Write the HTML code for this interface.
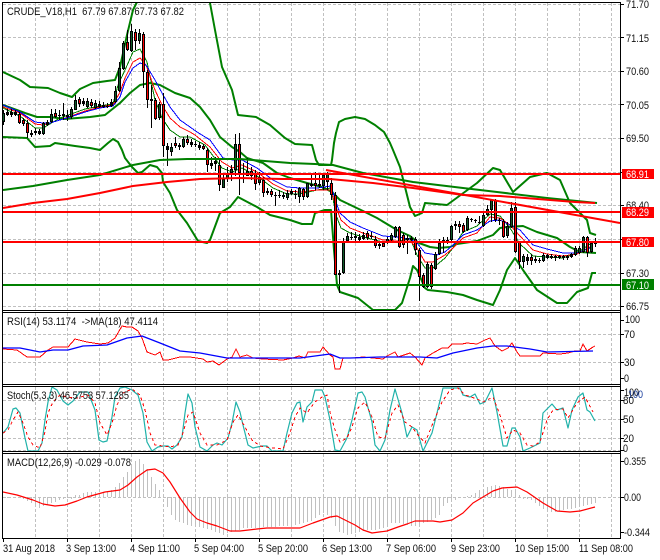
<!DOCTYPE html>
<html><head><meta charset="utf-8"><style>
html,body{margin:0;padding:0;background:#fff}
svg{display:block}
text{font-family:"Liberation Sans",sans-serif;font-size:11px;fill:#111}
.g{stroke:#c0c0c0;stroke-width:1;stroke-dasharray:3 2;fill:none}
.l{fill:none;shape-rendering:crispEdges}
.s{fill:none;stroke-linejoin:round}
</style></head><body>
<svg width="660" height="560" viewBox="0 0 660 560" xmlns="http://www.w3.org/2000/svg">
<defs>
<clipPath id="cm"><rect x="3" y="3" width="617" height="307"/></clipPath>
<clipPath id="cr"><rect x="3" y="313" width="617" height="71"/></clipPath>
<clipPath id="cs"><rect x="3" y="387" width="617" height="64"/></clipPath>
<clipPath id="cd"><rect x="3" y="454" width="617" height="84"/></clipPath>
</defs>
<rect width="660" height="560" fill="#fff"/>
<!-- grid -->
<path class="g" shape-rendering="crispEdges" d="M35.5 3V310M67.5 3V310M99.5 3V310M131.5 3V310M163.5 3V310M195.5 3V310M227.5 3V310M259.5 3V310M291.5 3V310M323.5 3V310M355.5 3V310M387.5 3V310M419.5 3V310M451.5 3V310M483.5 3V310M515.5 3V310M547.5 3V310M579.5 3V310M611.5 3V310
M35.5 313V384M67.5 313V384M99.5 313V384M131.5 313V384M163.5 313V384M195.5 313V384M227.5 313V384M259.5 313V384M291.5 313V384M323.5 313V384M355.5 313V384M387.5 313V384M419.5 313V384M451.5 313V384M483.5 313V384M515.5 313V384M547.5 313V384M579.5 313V384M611.5 313V384
M35.5 387V451M67.5 387V451M99.5 387V451M131.5 387V451M163.5 387V451M195.5 387V451M227.5 387V451M259.5 387V451M291.5 387V451M323.5 387V451M355.5 387V451M387.5 387V451M419.5 387V451M451.5 387V451M483.5 387V451M515.5 387V451M547.5 387V451M579.5 387V451M611.5 387V451
M35.5 454V538M67.5 454V538M99.5 454V538M131.5 454V538M163.5 454V538M195.5 454V538M227.5 454V538M259.5 454V538M291.5 454V538M323.5 454V538M355.5 454V538M387.5 454V538M419.5 454V538M451.5 454V538M483.5 454V538M515.5 454V538M547.5 454V538M579.5 454V538M611.5 454V538
M3 4.5H620M3 37.5H620M3 71.5H620M3 104.5H620M3 138.5H620M3 172.5H620M3 205.5H620M3 239.5H620M3 273.5H620M3 306.5H620
M3 334.5H620M3 362.5H620M3 400.5H620M3 419.5H620M3 438.5H620M3 450.5H620M3 497.5H620"/>

<g clip-path="url(#cm)">
<!-- Bollinger -->
<g class="s" stroke="#008000" stroke-width="2">
<polyline points="3,72 20,80 30,87 48,88 60,93 72,97 80,89 93,83 107,81 115,80 120,67 127,35 133,10 138,0"/>
<polyline points="210,3 215,30 222,67 232,90 238,115 256,117 270,125 285,138 295,144 312,145 316,160 319,165 331,165 332,160 334,143 336,133 339,122 345,119 355,117 365,119 375,125 384,132 390,143 393,150 400,167 410,207 415,216 422,213 425,203 447,205 477,183 493,168 500,170 513,192 530,177 547,173 560,180 570,203 587,220 590,233 596,235"/>
<polyline points="3,137 27,138 35,147 50,146 55,143 75,146 90,148 100,150 108,143 113,139 118,142 122,150 125,158 132,167 138,173 142,172 150,165 157,167 162,173 163,182 170,193 177,210 187,223 198,241 207,243 210,240 220,213 230,207 238,197 257,207 270,215 290,220 302,224 312,224 315,213 325,210 331,210 334,250 337,285 340,292 358,298 373,310 395,310 402,303 410,278 413,266 417,270 425,288 428,290 447,292 463,295 477,300 493,305 500,290 507,270 515,258 523,270 537,290 557,303 567,303 577,292 588,288 592,273 596,273"/>
<polyline points="3,105 25,113 37,117 50,117 65,119 90,117 105,115 120,103 130,93 140,85 150,83 160,85 175,93 190,98 200,107 210,120 220,137 232,147 240,152 247,158 263,163 277,173 290,178 307,183 322,187 332,192 340,200 363,211 377,218 397,230 410,236 419,243 430,247 438,248 450,247 457,244 477,241 493,235 500,228 507,227 523,226 537,232 557,238 570,247 580,252 596,253"/>
</g>
<!-- thin MAs -->
<polyline class="l" stroke="#008000" stroke-width="1" points="3,108 20,116 35,128 43,128 60,118 85,109 100,106 113,104 118,85 125,70 133,52 140,49 147,62 155,100 162,118 170,130 180,137 190,137 205,145 222,168 232,172 242,168 257,176 273,188 287,194 300,194 317,190 331,188 336,215 341,228 350,233 363,237 383,242 397,242 410,238 417,255 425,268 433,268 445,258 453,248 463,232 477,226 490,214 500,216 510,228 520,244 533,256 547,257 563,258 577,253 590,244"/>
<polyline class="l" stroke="#ff0000" stroke-width="1" points="3,107 20,113 35,124 43,125 60,120 85,111 100,107 113,105 120,92 125,78 133,62 140,58 146,65 155,90 162,105 170,118 180,127 190,132 195,135 210,147 222,162 232,168 242,165 257,172 273,184 287,191 300,192 317,190 331,190 337,210 341,220 350,228 363,233 383,240 397,241 410,241 417,248 425,262 433,262 445,255 453,248 463,238 477,233 490,217 500,218 510,225 520,236 533,250 547,254 563,256 577,254 590,247"/>
<polyline class="l" stroke="#0000ff" stroke-width="1" points="3,105 20,112 35,122 43,123 50,123 60,120 70,117 85,112 100,108 113,106 120,97 125,82 133,68 140,63 146,65 155,80 162,93 170,107 180,120 190,127 197,132 210,140 223,158 233,160 242,160 257,168 273,180 287,187 300,188 317,188 331,186 337,205 340,213 350,222 363,228 383,236 397,237 410,239 417,243 425,253 437,255 445,252 453,245 463,235 477,230 490,221 500,220 510,225 520,230 533,245 547,249 563,253 577,253 590,248"/>
<!-- candles -->
<path class="l" stroke="#000" stroke-width="1" d="M3.5 110V125M7.5 109V116M11.5 109V117M15.5 110V116M19.5 112V124M23.5 118V126M27.5 120V138M31.5 130V137M35.5 128V135M39.5 129V135M43.5 122V135M47.5 120V126M51.5 109V123M55.5 109V118M59.5 110V120M63.5 103V120M67.5 110V121M71.5 107V119M75.5 95V110M79.5 97V107M83.5 98V106M87.5 98V108M91.5 99V108M95.5 100V109M99.5 101V108M103.5 102V108M107.5 103V108M111.5 99V107M115.5 86V103M119.5 62V92M123.5 41V70M127.5 30V51M131.5 24V52M135.5 29V50M139.5 29V44M143.5 32V88M147.5 70V108M151.5 85V128M155.5 98V120M159.5 102V120M163.5 93V157M167.5 143V166M171.5 143V156M175.5 137V148M179.5 143V150M183.5 137V148M187.5 135V145M191.5 139V147M195.5 141V147M199.5 142V150M203.5 144V150M207.5 148V172M211.5 157V169M215.5 157V171M219.5 160V191M223.5 173V188M227.5 167V182M231.5 165V181M235.5 134V176M239.5 133V195M243.5 163V183M247.5 158V176M251.5 167V180M255.5 170V190M259.5 172V185M263.5 177V197M267.5 188V195M271.5 189V197M275.5 192V206M279.5 190V198M283.5 192V199M287.5 190V200M291.5 189V195M295.5 190V199M299.5 187V203M303.5 188V200M307.5 183V198M311.5 173V187M315.5 172V190M319.5 175V188M323.5 173V190M327.5 172V190M331.5 178V200M335.5 192V275M339.5 270V293M343.5 238V274M347.5 233V242M351.5 232V240M355.5 232V241M359.5 234V242M363.5 232V240M367.5 231V240M371.5 232V239M375.5 236V248M379.5 241V249M383.5 241V247M387.5 237V244M391.5 233V241M395.5 226V238M399.5 226V248M403.5 233V248M407.5 235V254M411.5 236V242M415.5 237V255M419.5 248V301M423.5 273V288M427.5 262V288M431.5 263V289M435.5 252V270M439.5 239V255M443.5 237V253M447.5 237V244M451.5 225V241M455.5 221V230M459.5 221V233M463.5 223V233M467.5 216V231M471.5 218V222M475.5 219V223M479.5 216V224M483.5 213V227M487.5 205V216M491.5 200V222M495.5 199V222M499.5 218V225M503.5 219V238M507.5 222V238M511.5 202V228M515.5 202V253M519.5 241V269M523.5 254V268M527.5 254V265M531.5 254V265M535.5 256V263M539.5 258V263M543.5 253V262M547.5 254V259M551.5 254V259M555.5 255V261M559.5 255V259M563.5 255V260M567.5 255V260M571.5 253V258M575.5 246V256M579.5 246V254M583.5 236V253M587.5 236V257M591.5 241V253M595.5 238V247"/>
<path class="l" stroke="#000" stroke-width="3" d="M3.5 113V122M7.5 112V115M11.5 112V115M15.5 112V115M19.5 114V123M23.5 120V124M27.5 123V133M31.5 133V135M35.5 131V133M39.5 131V134M43.5 123V134M47.5 122V125M51.5 114V122M55.5 113V117M59.5 115V116M63.5 114V116M67.5 115V117M71.5 109V117M75.5 100V110M79.5 99V104M83.5 101V104M87.5 101V107M91.5 102V106M95.5 103V108M99.5 104V107M103.5 105V107M107.5 106V107M111.5 102V106M115.5 91V102M119.5 68V91M123.5 43V69M127.5 42V50M131.5 31V51M135.5 32V41M139.5 33V41M143.5 34V72M147.5 72V100M151.5 99V101M155.5 100V119M159.5 104V118M163.5 104V146M167.5 146V150M171.5 147V152M175.5 143V146M179.5 145V147M183.5 139V147M187.5 139V143M191.5 142V145M195.5 144V145M199.5 145V148M203.5 146V149M207.5 150V165M211.5 163V166M215.5 161V164M219.5 165V185M223.5 179V188M227.5 173V179M231.5 169V173M235.5 144V170M239.5 144V173M243.5 173V175M247.5 171V176M251.5 171V176M255.5 174V184M259.5 177V183M263.5 180V193M267.5 191V193M271.5 191V195M275.5 195V196M279.5 195V196M283.5 195V197M287.5 193V198M291.5 191V194M295.5 194V195M299.5 188V197M303.5 189V197M307.5 183V197M311.5 184V186M315.5 183V186M319.5 184V186M323.5 175V186M327.5 174V182M331.5 183V195M335.5 195V275M339.5 273V275M343.5 242V273M347.5 236V241M351.5 237V238M355.5 236V238M359.5 237V240M363.5 235V239M367.5 233V238M371.5 236V237M375.5 239V246M379.5 244V246M383.5 243V247M387.5 239V243M391.5 235V240M395.5 227V237M399.5 227V247M403.5 235V245M407.5 238V240M411.5 238V240M415.5 239V250M419.5 250V277M423.5 275V287M427.5 264V287M431.5 265V287M435.5 254V269M439.5 243V254M443.5 240V243M447.5 240V243M451.5 226V240M455.5 224V226M459.5 224V227M463.5 225V232M467.5 218V230M471.5 219V220M475.5 220V221M479.5 222V223M483.5 215V226M487.5 209V215M491.5 200V210M495.5 200V220M499.5 220V221M503.5 221V237M507.5 226V236M511.5 208V227M515.5 207V252M519.5 242V262M523.5 256V262M527.5 257V261M531.5 257V261M535.5 259V261M539.5 260V261M543.5 255V261M547.5 255V258M551.5 256V258M555.5 256V258M559.5 256V258M563.5 256V258M567.5 256V258M571.5 254V257M575.5 248V255M579.5 248V253M583.5 237V252M587.5 237V253M591.5 243V252M595.5 241V244"/>
<path class="l" stroke="#0e5a28" stroke-width="1" d="M3.5 114V121M43.5 124V133M51.5 115V121M71.5 110V116M75.5 101V109M87.5 102V106M95.5 104V107M115.5 92V101M119.5 69V90M123.5 44V68M131.5 32V50M139.5 34V40M159.5 105V117M171.5 148V151M183.5 140V146M223.5 180V187M227.5 174V178M231.5 170V172M235.5 145V169M247.5 172V175M259.5 178V182M287.5 194V197M299.5 189V196M307.5 184V196M323.5 176V185M327.5 175V181M343.5 243V272M347.5 237V240M387.5 240V242M391.5 236V239M395.5 228V236M427.5 265V286M435.5 255V268M439.5 244V253M451.5 227V239M467.5 219V229M483.5 216V225M487.5 210V214M491.5 201V209M507.5 227V235M511.5 209V226M523.5 257V261M543.5 256V260M575.5 249V254M579.5 249V252M583.5 238V251M591.5 244V251"/>
<path class="l" stroke="#ff0000" stroke-width="1" d="M19.5 115V122M23.5 121V123M27.5 124V132M55.5 114V116M79.5 100V103M91.5 103V105M127.5 43V49M135.5 33V40M143.5 35V71M147.5 73V99M155.5 101V118M163.5 105V145M175.5 144V145M187.5 140V142M203.5 147V148M207.5 151V164M219.5 166V184M239.5 145V172M251.5 172V175M255.5 175V183M263.5 181V192M271.5 192V194M303.5 190V196M315.5 184V185M331.5 184V194M335.5 196V274M367.5 234V237M375.5 240V245M383.5 244V246M399.5 228V246M403.5 236V244M415.5 240V249M419.5 251V276M423.5 276V286M431.5 266V286M459.5 225V226M463.5 226V231M495.5 201V219M503.5 222V236M515.5 208V251M519.5 243V261M531.5 258V260M587.5 238V252"/>
<!-- long MA and trend lines -->
<polyline class="s" stroke="#008000" stroke-width="2" points="3,190 33,186 67,180 100,175 133,165 160,160 187,159 240,159 290,163 315,164 333,165 363,173 413,182 463,188 497,192 547,198 597,203"/>
<polyline class="s" stroke="#ff0000" stroke-width="2" points="3,208 33,203 67,199 100,193 133,186 167,182 200,179 240,178 283,179 330,179 373,183 413,188 463,195 500,196 575,202 595,203"/>
<polyline class="s" stroke="#ff0000" stroke-width="2" points="326,170 620,223"/>
<path class="l" stroke="#ff0000" stroke-width="2" d="M3 174H620M3 212H620M3 242H620"/>
<path class="l" stroke="#008000" stroke-width="2" d="M3 285H620"/>
</g>

<!-- RSI -->
<g clip-path="url(#cr)">
<polyline class="l" stroke="#ff0000" points="3,349 17,350 27,357 40,357 48,350 53,347 68,347 75,339 87,342 100,344 108,343 115,338 122,326 127,327 132,327 138,331 142,338 147,352 155,355 160,352 163,360 168,360 180,357 190,357 203,359 207,362 213,361 219,365 227,359 232,357 236,349 240,357 247,355 253,358 263,359 283,360 293,358 299,356 305,358 308,352 320,352 323,347 330,355 333,357 335,369 340,369 343,358 353,358 363,357 373,358 383,359 387,356 395,352 398,357 410,353 415,357 422,365 425,358 433,353 442,348 448,348 452,344 462,344 467,343 477,344 485,340 490,338 495,346 502,351 508,348 512,343 517,352 520,356 540,356 543,353 560,354 568,353 575,351 580,351 583,344 587,351 593,347 595,346"/>
<polyline class="s" stroke="#0000ff" stroke-width="1.3" points="3,348 20,348 40,352 53,350 68,350 83,346 107,345 127,338 142,336 160,343 180,351 200,353 227,358 267,358 300,358 330,354 340,358 350,358 380,357 420,357 437,358 453,353 477,348 493,346 507,346 530,349 547,352 593,351"/>
</g>

<!-- Stoch -->
<g clip-path="url(#cs)">
<polyline class="s" stroke="#20b2aa" stroke-width="1.2" points="3,433 8,427 13,409 16,408 20,413 25,438 28,451 38,451 42,443 45,420 48,402 52,387 57,390 63,401 68,405 73,401 80,392 88,392 95,410 99,440 103,442 107,441 112,417 115,397 120,388 125,387 132,390 138,395 143,413 147,442 152,451 158,447 163,446 168,446 172,449 177,445 182,437 185,413 188,394 192,403 195,427 200,447 207,451 213,445 217,443 222,445 228,438 232,423 236,402 240,412 243,425 248,445 253,448 262,446 267,446 272,451 283,451 287,433 292,413 297,403 300,402 303,422 307,407 312,402 315,390 322,390 325,397 330,420 335,450 340,451 347,438 352,420 358,393 362,392 365,397 372,422 375,445 380,451 385,440 390,410 395,389 402,413 407,437 412,427 417,430 423,451 432,433 437,413 443,388 460,388 463,395 470,397 475,394 480,404 485,402 492,388 497,412 503,446 507,446 512,428 515,428 520,437 523,451 530,448 540,443 543,413 552,404 557,410 563,408 568,428 572,410 578,397 583,393 587,410 590,412 595,421"/>
<polyline class="l" stroke="#ff0000" stroke-width="1" stroke-dasharray="3 3" points="3,433 8,430 13,420 18,412 23,423 28,437 33,445 40,448 45,432 48,413 53,402 60,395 67,397 77,398 88,395 95,403 100,423 107,435 112,423 117,405 123,393 132,389 140,395 145,410 150,433 155,445 163,446 170,447 178,445 183,433 188,415 193,412 200,433 207,445 217,445 227,440 233,422 238,415 245,427 252,440 260,446 272,448 283,449 290,433 295,417 300,408 307,413 315,402 322,397 327,395 330,412 335,430 340,442 347,438 352,427 358,408 365,402 372,417 378,437 385,438 392,413 398,405 405,422 412,427 418,435 425,443 433,423 442,402 450,390 458,388 465,395 477,399 483,402 493,397 500,415 507,438 513,430 520,433 527,445 533,446 540,442 547,420 553,410 563,409 568,418 577,403 585,397 593,412"/>
</g>

<!-- MACD -->
<g clip-path="url(#cd)">
<path class="l" stroke="#c0c0c0" stroke-width="1" d="M7.5 497V498M19.5 497V498M23.5 497V499M27.5 497V501M31.5 497V503M35.5 497V507M39.5 497V508M43.5 497V506M47.5 497V505M51.5 497V503M55.5 497V502M59.5 497V500M63.5 497V499M67.5 497V498M71.5 497V499M75.5 497V495M79.5 497V495M83.5 497V493M87.5 497V492M91.5 497V492M95.5 497V492M99.5 497V493M103.5 497V492M107.5 497V491M111.5 497V490M115.5 497V487M119.5 497V483M123.5 497V477M127.5 497V472M131.5 497V465M135.5 497V461M139.5 497V459M143.5 497V464M147.5 497V469M151.5 497V477M155.5 497V484M159.5 497V490M163.5 497V495M167.5 497V507M171.5 497V515M175.5 497V520M179.5 497V522M183.5 497V523M187.5 497V525M191.5 497V526M195.5 497V527M199.5 497V527M203.5 497V528M207.5 497V529M211.5 497V530M215.5 497V532M219.5 497V533M223.5 497V535M227.5 497V533M231.5 497V532M235.5 497V531M239.5 497V530M243.5 497V528M247.5 497V528M251.5 497V528M255.5 497V528M259.5 497V528M263.5 497V527M267.5 497V527M271.5 497V527M275.5 497V527M279.5 497V526M283.5 497V526M287.5 497V526M291.5 497V526M295.5 497V525M299.5 497V524M303.5 497V523M307.5 497V522M311.5 497V521M315.5 497V518M319.5 497V515M323.5 497V513M327.5 497V515M331.5 497V518M335.5 497V526M339.5 497V532M343.5 497V533M347.5 497V535M351.5 497V534M355.5 497V533M359.5 497V532M363.5 497V531M367.5 497V530M371.5 497V530M375.5 497V530M379.5 497V529M383.5 497V528M387.5 497V525M391.5 497V523M395.5 497V523M399.5 497V523M403.5 497V524M407.5 497V525M411.5 497V526M415.5 497V526M419.5 497V525M423.5 497V523M427.5 497V522M431.5 497V520M435.5 497V518M439.5 497V515M443.5 497V506M447.5 497V503M451.5 497V501M455.5 497V500M459.5 497V498M467.5 497V496M471.5 497V495M475.5 497V493M479.5 497V490M483.5 497V489M487.5 497V487M491.5 497V486M495.5 497V485M499.5 497V486M503.5 497V487M507.5 497V489M511.5 497V490M515.5 497V492M519.5 497V495M523.5 497V499M527.5 497V499M531.5 497V500M535.5 497V503M539.5 497V506M543.5 497V509M547.5 497V512M551.5 497V512M555.5 497V512M559.5 497V511M563.5 497V510M567.5 497V509M571.5 497V509M575.5 497V508M579.5 497V507M583.5 497V506M587.5 497V505M591.5 497V504M595.5 497V503"/>
<polyline class="s" stroke="#ff0000" stroke-width="1.2" points="3,492 17,495 33,500 43,504 55,506 65,505 77,501 87,497 105,492 120,490 128,485 137,477 147,470 155,469 163,473 170,482 180,498 190,512 197,519 207,523 217,526 230,531 240,531 257,529 267,528 300,528 313,523 330,517 337,516 345,520 355,525 363,530 372,533 387,531 398,527 407,524 415,521 433,521 440,522 452,520 463,513 473,503 483,497 493,491 502,488 517,487 527,492 543,503 557,511 570,512 580,511 595,507"/>
</g>

<!-- frames -->
<g fill="none" stroke="#000" stroke-width="1" shape-rendering="crispEdges">
<path d="M2.5 2V539M2 2.5H621M2 310.5H621M2 312.5H621M2 384.5H621M2 386.5H621M2 451.5H621M2 453.5H621M2 538.5H621"/>
<path d="M620.5 2V539"/>
<path d="M620 4.5h4M620 37.5h4M620 71.5h4M620 104.5h4M620 138.5h4M620 172.5h4M620 205.5h4M620 239.5h4M620 273.5h4M620 306.5h4M620 320.5h4M620 334.5h4M620 362.5h4M620 378.5h4M620 390.5h4M620 400.5h4M620 419.5h4M620 438.5h4M620 450.5h4M620 461.5h4M620 497.5h4M620 532.5h4"/>
<path d="M3.5 538v4M67.5 538v4M131.5 538v4M195.5 538v4M259.5 538v4M323.5 538v4M387.5 538v4M451.5 538v4M515.5 538v4M579.5 538v4"/>
</g>

<!-- panel titles -->
<text x="7" y="15" textLength="177" lengthAdjust="spacingAndGlyphs">CRUDE_V18,H1&#160;&#160;67.79 67.87 67.73 67.82</text>
<text x="7" y="325" textLength="151" lengthAdjust="spacingAndGlyphs">RSI(14) 53.1174&#160;&#160;-&gt;MA(18) 47.4114</text>
<text x="7" y="399" textLength="122" lengthAdjust="spacingAndGlyphs">Stoch(5,3,3) 46.5753 57.1285</text>
<text x="7" y="466" textLength="124" lengthAdjust="spacingAndGlyphs">MACD(12,26,9) -0.029 -0.078</text>

<!-- price axis -->
<text x="626" y="8" textLength="23" lengthAdjust="spacingAndGlyphs">71.70</text>
<text x="626" y="42" textLength="23" lengthAdjust="spacingAndGlyphs">71.15</text>
<text x="626" y="75" textLength="23" lengthAdjust="spacingAndGlyphs">70.60</text>
<text x="626" y="109" textLength="23" lengthAdjust="spacingAndGlyphs">70.05</text>
<text x="626" y="142" textLength="23" lengthAdjust="spacingAndGlyphs">69.50</text>
<text x="626" y="209" textLength="23" lengthAdjust="spacingAndGlyphs">68.40</text>
<text x="626" y="277" textLength="23" lengthAdjust="spacingAndGlyphs">67.30</text>
<text x="626" y="310" textLength="23" lengthAdjust="spacingAndGlyphs">66.75</text>

<rect x="622" y="169" width="32" height="10" fill="#ff0000"/>
<rect x="622" y="207" width="32" height="11" fill="#ff0000"/>
<rect x="622" y="237" width="32" height="10" fill="#ff0000"/>
<rect x="622" y="279" width="32" height="11" fill="#008000"/>
<text x="626" y="178" textLength="23" lengthAdjust="spacingAndGlyphs" style="fill:#fff">68.91</text>
<text x="626" y="216" textLength="23" lengthAdjust="spacingAndGlyphs" style="fill:#fff">68.29</text>
<text x="626" y="246" textLength="23" lengthAdjust="spacingAndGlyphs" style="fill:#fff">67.80</text>
<text x="626" y="289" textLength="23" lengthAdjust="spacingAndGlyphs" style="fill:#fff">67.10</text>

<!-- RSI axis -->
<text x="625" y="323" textLength="15" lengthAdjust="spacingAndGlyphs">100</text>
<text x="624" y="338" textLength="11" lengthAdjust="spacingAndGlyphs">70</text>
<text x="624" y="366" textLength="11" lengthAdjust="spacingAndGlyphs">30</text>
<text x="624" y="382" textLength="5" lengthAdjust="spacingAndGlyphs">0</text>
<!-- Stoch axis -->
<text x="624" y="396" textLength="15" lengthAdjust="spacingAndGlyphs">100</text>
<text x="628" y="398" textLength="15" lengthAdjust="spacingAndGlyphs" style="fill:#1a3f9e">100</text>
<text x="623" y="404" textLength="11" lengthAdjust="spacingAndGlyphs">80</text>
<text x="623" y="423" textLength="11" lengthAdjust="spacingAndGlyphs">50</text>
<text x="623" y="442" textLength="11" lengthAdjust="spacingAndGlyphs">20</text>
<text x="623" y="452" textLength="5" lengthAdjust="spacingAndGlyphs">0</text>
<!-- MACD axis -->
<text x="624" y="465" textLength="22" lengthAdjust="spacingAndGlyphs">0.355</text>
<text x="624" y="501" textLength="17" lengthAdjust="spacingAndGlyphs">0.00</text>
<text x="624" y="536" textLength="26" lengthAdjust="spacingAndGlyphs">-0.344</text>

<!-- time axis -->
<text x="3" y="552" textLength="52" lengthAdjust="spacingAndGlyphs">31 Aug 2018</text>
<text x="66" y="552" textLength="50" lengthAdjust="spacingAndGlyphs">3 Sep 13:00</text>
<text x="130" y="552" textLength="50" lengthAdjust="spacingAndGlyphs">4 Sep 11:00</text>
<text x="194" y="552" textLength="50" lengthAdjust="spacingAndGlyphs">5 Sep 04:00</text>
<text x="258" y="552" textLength="50" lengthAdjust="spacingAndGlyphs">5 Sep 20:00</text>
<text x="322" y="552" textLength="50" lengthAdjust="spacingAndGlyphs">6 Sep 13:00</text>
<text x="386" y="552" textLength="50" lengthAdjust="spacingAndGlyphs">7 Sep 06:00</text>
<text x="451" y="552" textLength="49" lengthAdjust="spacingAndGlyphs">9 Sep 23:00</text>
<text x="515" y="552" textLength="54" lengthAdjust="spacingAndGlyphs">10 Sep 15:00</text>
<text x="579" y="552" textLength="54" lengthAdjust="spacingAndGlyphs">11 Sep 08:00</text>
</svg>
</body></html>
